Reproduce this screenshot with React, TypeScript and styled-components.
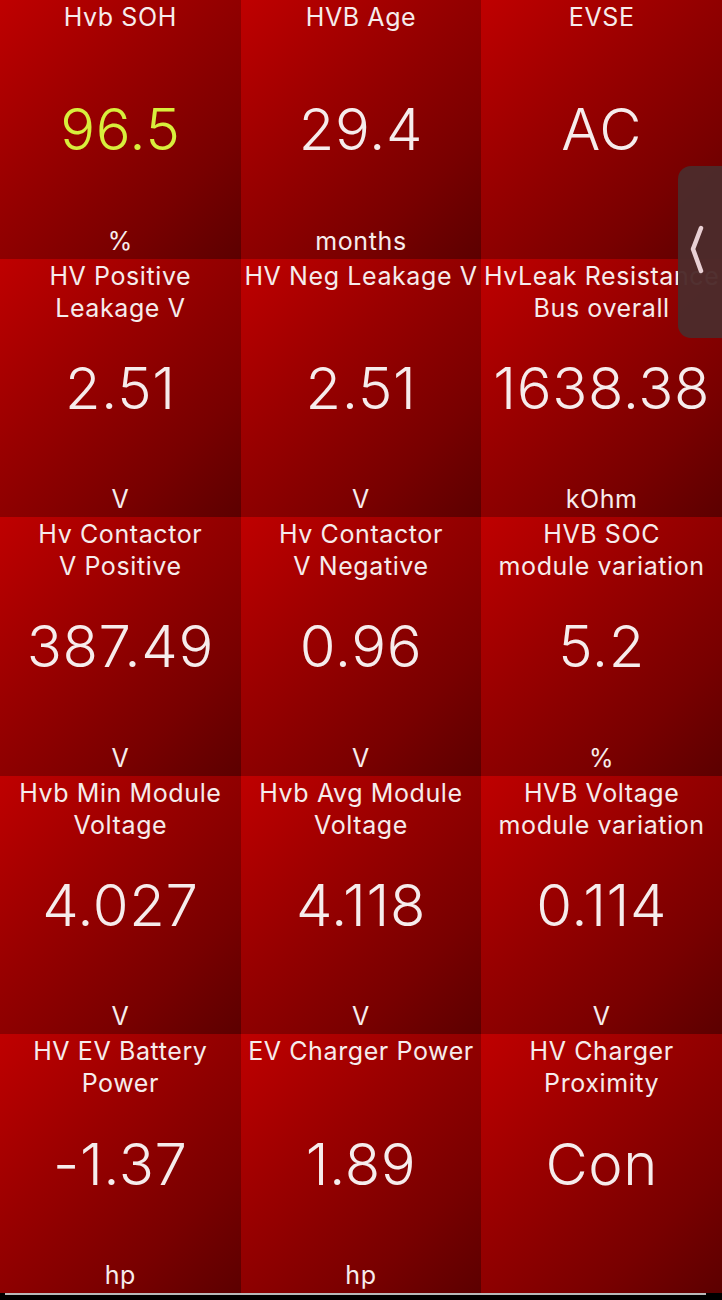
import styled, { createGlobalStyle } from "styled-components";

type Gauge = {
  title: string[];
  value: string;
  unit?: string;
  highlight?: boolean;
};

const gauges: Gauge[] = [
  { title: ["Hvb SOH"], value: "96.5", unit: "%", highlight: true },
  { title: ["HVB Age"], value: "29.4", unit: "months" },
  { title: ["EVSE"], value: "AC" },
  { title: ["HV Positive", "Leakage V"], value: "2.51", unit: "V" },
  { title: ["HV Neg Leakage V"], value: "2.51", unit: "V" },
  { title: ["HvLeak Resistance", "Bus overall"], value: "1638.38", unit: "kOhm" },
  { title: ["Hv Contactor", "V Positive"], value: "387.49", unit: "V" },
  { title: ["Hv Contactor", "V Negative"], value: "0.96", unit: "V" },
  { title: ["HVB SOC", "module variation"], value: "5.2", unit: "%" },
  { title: ["Hvb Min Module", "Voltage"], value: "4.027", unit: "V" },
  { title: ["Hvb Avg Module", "Voltage"], value: "4.118", unit: "V" },
  { title: ["HVB Voltage", "module variation"], value: "0.114", unit: "V" },
  { title: ["HV EV Battery", "Power"], value: "-1.37", unit: "hp" },
  { title: ["EV Charger Power"], value: "1.89", unit: "hp" },
  { title: ["HV Charger", "Proximity"], value: "Con" },
];

export default function App() {
  return (
    <>
      <GlobalStyle />
      <Screen>
        <Grid>
          {gauges.map((g, i) => (
            <Cell key={i}>
              <Title>
                {g.title.map((line, j) => (
                  <TitleLine key={j}>{line}</TitleLine>
                ))}
              </Title>
              <Value $highlight={g.highlight}>{g.value}</Value>
              {g.unit && <Unit>{g.unit}</Unit>}
            </Cell>
          ))}
        </Grid>
        <HomeBar />
        <SideHandle>
          <svg width="16" height="52" viewBox="0 0 16 52">
            <path
              d="M12 4 L4 25 L12 47"
              fill="none"
              stroke="#e9d0d4"
              strokeWidth="4.5"
              strokeLinecap="round"
              strokeLinejoin="round"
            />
          </svg>
        </SideHandle>
      </Screen>
    </>
  );
}

const GlobalStyle = createGlobalStyle`
  html, body {
    margin: 0;
    padding: 0;
    background: #000;
  }
  body {
    font-family: Inter, "Liberation Sans", sans-serif;
  }
`;

const Screen = styled.div`
  position: relative;
  width: 722px;
  height: 1300px;
  background: #000;
  overflow: hidden;
`;

const Grid = styled.div`
  display: grid;
  grid-template-columns: repeat(3, 1fr);
  grid-template-rows: repeat(5, 258.6px);
`;

const Cell = styled.div`
  display: grid;
  grid-template-areas: "stack";
  overflow: hidden;
  color: #f6ecec;
  text-align: center;
  background: linear-gradient(135deg, #bf0000 0%, #9a0000 38%, #780000 75%, #5c0000 100%);
`;

const Title = styled.div`
  grid-area: stack;
  align-self: start;
  padding-top: 1px;
  font-size: 25px;
  line-height: 32px;
  letter-spacing: 0.6px;
`;

const TitleLine = styled.div`
  white-space: nowrap;
`;

const Value = styled.div<{ $highlight?: boolean }>`
  grid-area: stack;
  align-self: center;
  font-size: 58px;
  font-weight: 300;
  line-height: 1;
  letter-spacing: 0.6px;
  color: ${(p) => (p.$highlight ? "#d8ee3c" : "#f6ecec")};
`;

const Unit = styled.div`
  grid-area: stack;
  align-self: end;
  font-size: 25px;
  line-height: 32px;
  letter-spacing: 0.6px;
  padding-bottom: 2px;
`;

const HomeBar = styled.div`
  height: 2px;
  margin: 0 16px 0 5px;
  background: #b9b9b9;
`;

const SideHandle = styled.div`
  position: absolute;
  top: 166px;
  right: 0;
  width: 44px;
  height: 172px;
  background: rgba(76, 42, 42, 0.97);
  border-radius: 13px 0 0 13px;
  display: flex;
  align-items: center;
  padding-left: 11px;
  box-sizing: border-box;
  padding-bottom: 4px;
`;
